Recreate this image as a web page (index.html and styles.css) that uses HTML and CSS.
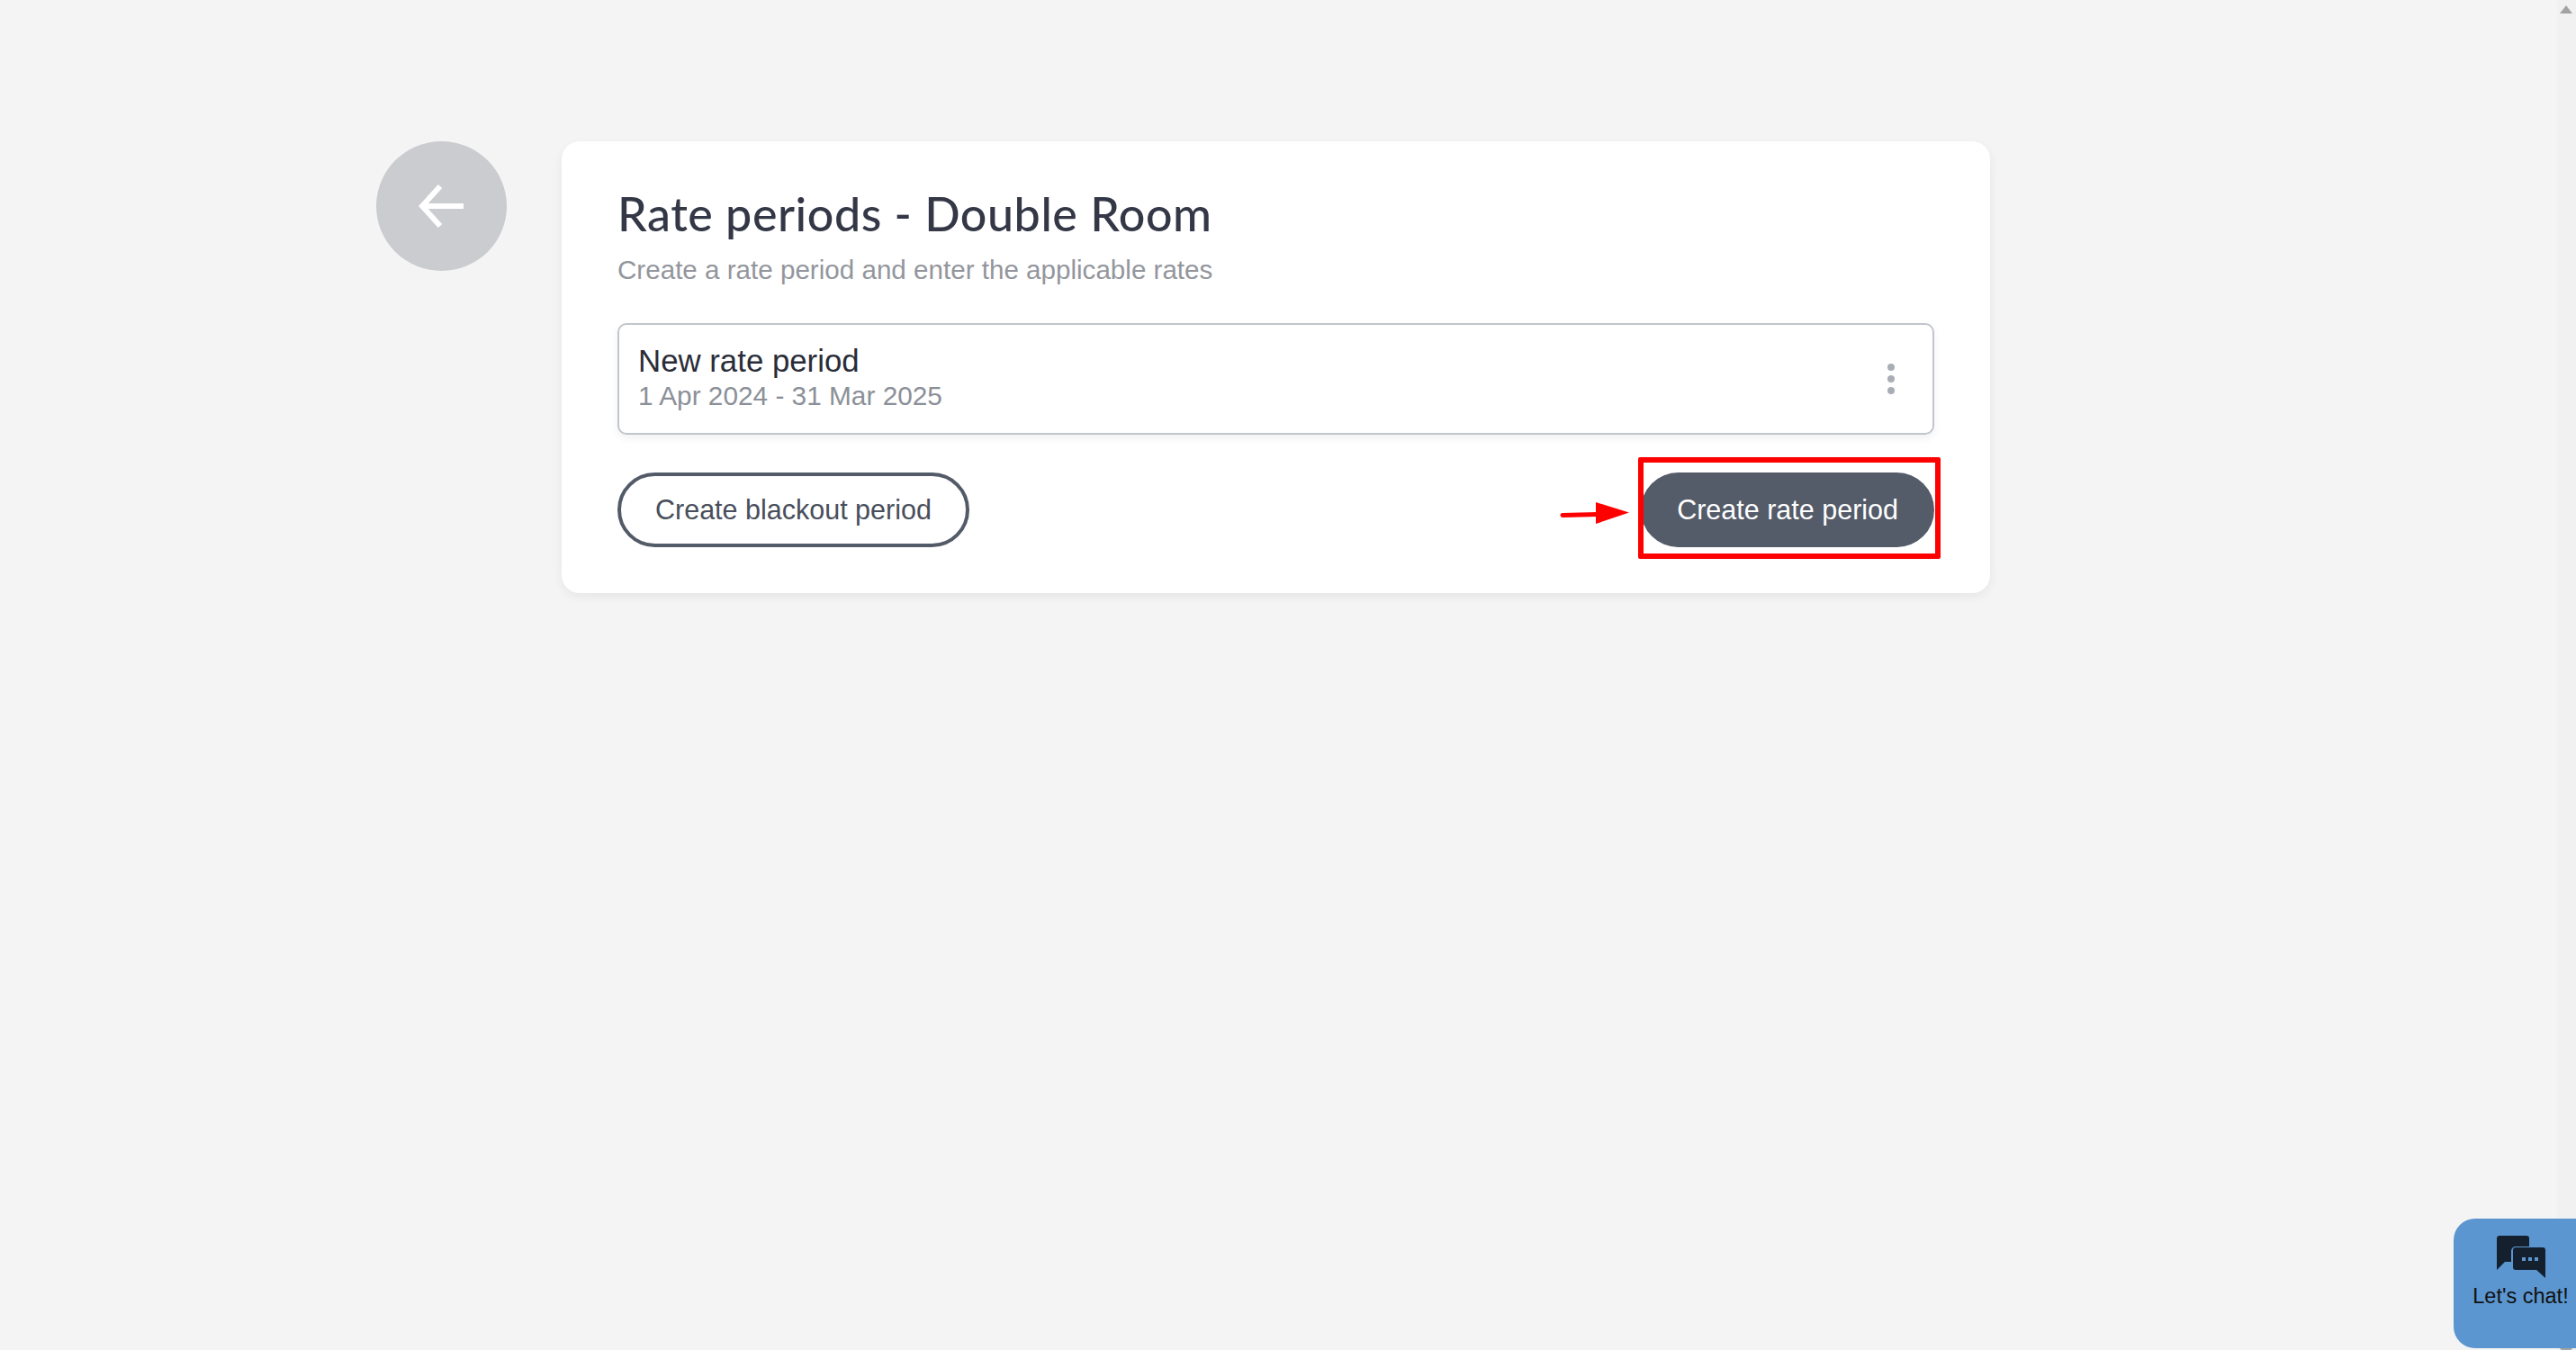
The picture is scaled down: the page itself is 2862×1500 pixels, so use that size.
FILE: index.html
```html
<!DOCTYPE html>
<html lang="en">
<head>
	<meta charset="UTF-8">
	<title>Rate periods</title>
	<link rel="stylesheet" href="styles.css">
</head>
<body>
<div class="page">
	<main class="content">
		<a class="back" href="#">
			<svg width="52" height="48" viewBox="0 0 52 48"><path d="M50 24H5M24 2L4 24l20 22" fill="none" stroke="#fff" stroke-width="6"/></svg>
		</a>
		<section class="card">
			<h1>Rate periods - Double Room</h1>
			<p class="sub">Create a rate period and enter the applicable rates</p>
			<div class="period">
				<div>
					<div class="period-name">New rate period</div>
					<div class="period-date">1 Apr 2024 - 31 Mar 2025</div>
				</div>
				<div class="dots"><i></i><i></i><i></i></div>
			</div>
			<div class="actions">
				<button class="btn btn-outline">Create blackout period</button>
				<button class="btn btn-dark">Create rate period</button>
			</div>
			<!-- annotation drawn on top of the screenshot -->
			<div class="mark"></div>
			<svg class="mark-arrow" width="78" height="26" viewBox="0 0 78 26"><path d="M3 15.5L42 14.500" stroke="#f00" stroke-width="5" stroke-linecap="round"/><path d="M40 1L77 12.500 40 25z" fill="#f00"/></svg>
		</section>
	</main>
	<aside class="scrollbar">
		<svg width="14" height="9" viewBox="0 0 14 9"><path d="M7 0L14 9H0z" fill="#a3a3a3"/></svg>
		<svg class="scroll-down" width="14" height="9" viewBox="0 0 14 9"><path d="M7 9L14 0H0z" fill="#a3a3a3"/></svg>
	</aside>
</div>
<div class="chat">
	<svg width="54" height="47" viewBox="0 0 54 47"><path d="M3 0h30a3 3 0 0 1 3 3v9H21a5 5 0 0 0-5 5v12H9l-9 9V3a3 3 0 0 1 3-3z" fill="#14202e"/><path d="M21 13h30a3 3 0 0 1 3 3v31l-10-9H21a3 3 0 0 1-3-3V16a3 3 0 0 1 3-3z" fill="#14202e"/><path d="M28 24h4v4h-4zM35 24h4v4h-4zM42 24h4v4h-4z" fill="#5b96d0"/></svg>
	<span>Let's chat!</span>
</div>
</body>
</html>
```

FILE: styles.css
```css
*{
	box-sizing: border-box;
}
html,body{
	margin: 0;
	height: 100%;
}
body{
	background: #f4f4f4;
	font-family: 'Liberation Sans', Arial, sans-serif;
	overflow: hidden;
}
.page{
	display: flex;
	height: 100%;
}
.content{
	flex: 1;
	display: flex;
	align-items: flex-start;
	gap: 61px;
	padding: 157px 0 0 418px;
}
.back{
	flex: none;
	display: flex;
	align-items: center;
	justify-content: center;
	width: 145px;
	height: 144px;
	border-radius: 50%;
	background: #cbccd0;
}
.card{
	position: relative;
	width: 1587px;
	height: 502px;
	padding: 50px 62px 0;
	background: #fff;
	border-radius: 20px;
	box-shadow: 0 4px 12px rgba(0,0,0,.06);
}
h1{
	margin: 0;
	font-family: 'Lato', sans-serif;
	font-size: 52px;
	letter-spacing: .55px;
	line-height: 60px;
	font-weight: 500;
	color: #343746;
}
.sub{
	margin: 14px 0 0;
	font-size: 29.600px;
	line-height: 38px;
	color: #93969c;
}
.period{
	display: flex;
	align-items: center;
	justify-content: space-between;
	height: 124px;
	margin-top: 40px;
	padding: 0 20px 3px 21px;
	border: 2px solid #c1c6cc;
	border-radius: 10px;
	box-shadow: 0 4px 10px rgba(0,0,0,.06);
}
.period-name{
	font-size: 34.800px;
	line-height: 40px;
	color: #2a2d38;
}
.period-date{
	font-size: 29.800px;
	line-height: 38px;
	color: #8b9098;
}
.dots{
	display: flex;
	flex-direction: column;
	gap: 5px;
	margin-top: 3px;
	padding-right: 22px;
}
.dots i{
	width: 8px;
	height: 8px;
	border-radius: 50%;
	background: #a9adb5;
}
.actions{
	display: flex;
	justify-content: space-between;
	margin-top: 42px;
}
.btn{
	height: 83px;
	border-radius: 42px;
	font-family: inherit;
	font-size: 30.500px;
}
.btn-outline{
	padding: 0 38px;
	border: 4px solid #535a68;
	background: #fff;
	color: #484e5b;
}
.btn-dark{
	padding: 0 40px;
	border: 0;
	background: #545b69;
	color: #fff;
}
.mark{
	position: absolute;
	left: 1196px;
	top: 351px;
	width: 336px;
	height: 113px;
	border: 6px solid #f00;
	border-radius: 2px;
}
.mark-arrow{
	position: absolute;
	left: 1109px;
	top: 400px;
}
.scrollbar{
	flex: none;
	display: flex;
	flex-direction: column;
	justify-content: space-between;
	width: 21px;
	padding: 6px 0 0 3px;
	background: #f1f1f1;
}
.scrollbar svg{
	display: block;
}
.scroll-down{
	margin-bottom: -7px;
}
.chat{
	position: fixed;
	right: 0;
	bottom: 2px;
	width: 136px;
	height: 144px;
	padding: 19px 0 0 13px;
	display: flex;
	flex-direction: column;
	align-items: center;
	gap: 7px;
	background: #5b96d0;
	border-radius: 24px 0 0 24px;
	color: #111;
	font-size: 23.500px;
}
```
